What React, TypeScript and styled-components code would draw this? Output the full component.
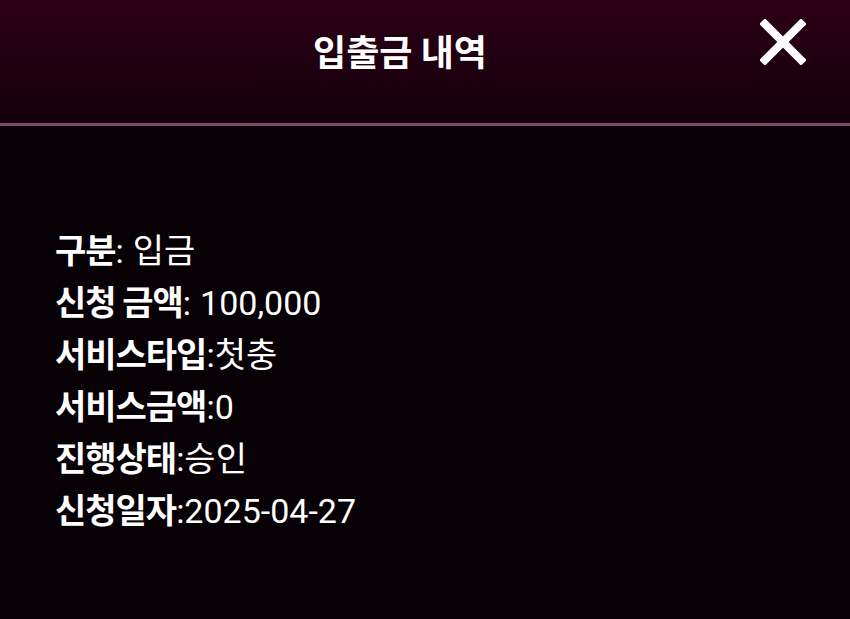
import styled, { createGlobalStyle } from "styled-components";

const GlobalStyle = createGlobalStyle`
  html, body {
    margin: 0;
    padding: 0;
    background: #070004;
  }
  body {
    font-family: Roboto, "Noto Sans CJK KR", sans-serif;
    color: #ffffff;
  }
`;

const Page = styled.div`
  width: 850px;
  height: 619px;
  display: flex;
  flex-direction: column;
  background: #070004;
  overflow: hidden;
`;

const Header = styled.header`
  height: 123px;
  flex-shrink: 0;
  display: flex;
  align-items: flex-start;
  justify-content: center;
  padding-right: 50px;
  position: relative;
  background: linear-gradient(180deg, #2b0016 0%, #1e000f 60%, #16000c 100%);
  border-bottom: 3px solid #7e4a69;
`;

const Title = styled.h1`
  margin: 24px 0 0;
  font-family: "Noto Sans CJK KR", sans-serif;
  font-size: 36px;
  font-weight: 700;
  line-height: 52px;
`;

const CloseButton = styled.button`
  position: absolute;
  top: 19px;
  right: 44px;
  width: 46px;
  height: 46px;
  padding: 0;
  border: none;
  background: none;
  cursor: pointer;
  svg {
    display: block;
  }
`;

const Details = styled.dl`
  margin: 0;
  padding: 97px 0 0 55px;
  display: flex;
  flex-direction: column;
`;

const Row = styled.div`
  display: flex;
  align-items: baseline;
  height: 52px;
  font-size: 34px;
  line-height: 52px;
  white-space: pre;
`;

const Label = styled.dt`
  font-family: "Noto Sans CJK KR", sans-serif;
  font-weight: 700;
  letter-spacing: -1px;
`;

const Value = styled.dd<{ $gap: boolean }>`
  margin: 0;
  font-weight: 400;
  &::before {
    content: ":";
    margin-right: ${({ $gap }) => ($gap ? "9px" : "0")};
  }
`;

const rows = [
  { label: "구분", value: "입금", gap: true },
  { label: "신청 금액", value: "100,000", gap: true },
  { label: "서비스타입", value: "첫충", gap: false },
  { label: "서비스금액", value: "0", gap: false },
  { label: "진행상태", value: "승인", gap: false },
  { label: "신청일자", value: "2025-04-27", gap: false },
];

export default function App() {
  return (
    <Page>
      <GlobalStyle />
      <Header>
        <Title>입출금 내역</Title>
        <CloseButton aria-label="닫기">
          <svg width="46" height="46" viewBox="0 0 46 46">
            <path
              d="M5 5 L41 41 M41 5 L5 41"
              stroke="#ffffff"
              strokeWidth="8"
              strokeLinecap="square"
            />
          </svg>
        </CloseButton>
      </Header>
      <Details>
        {rows.map((r) => (
          <Row key={r.label}>
            <Label>{r.label}</Label>
            <Value $gap={r.gap}>{r.value}</Value>
          </Row>
        ))}
      </Details>
    </Page>
  );
}
